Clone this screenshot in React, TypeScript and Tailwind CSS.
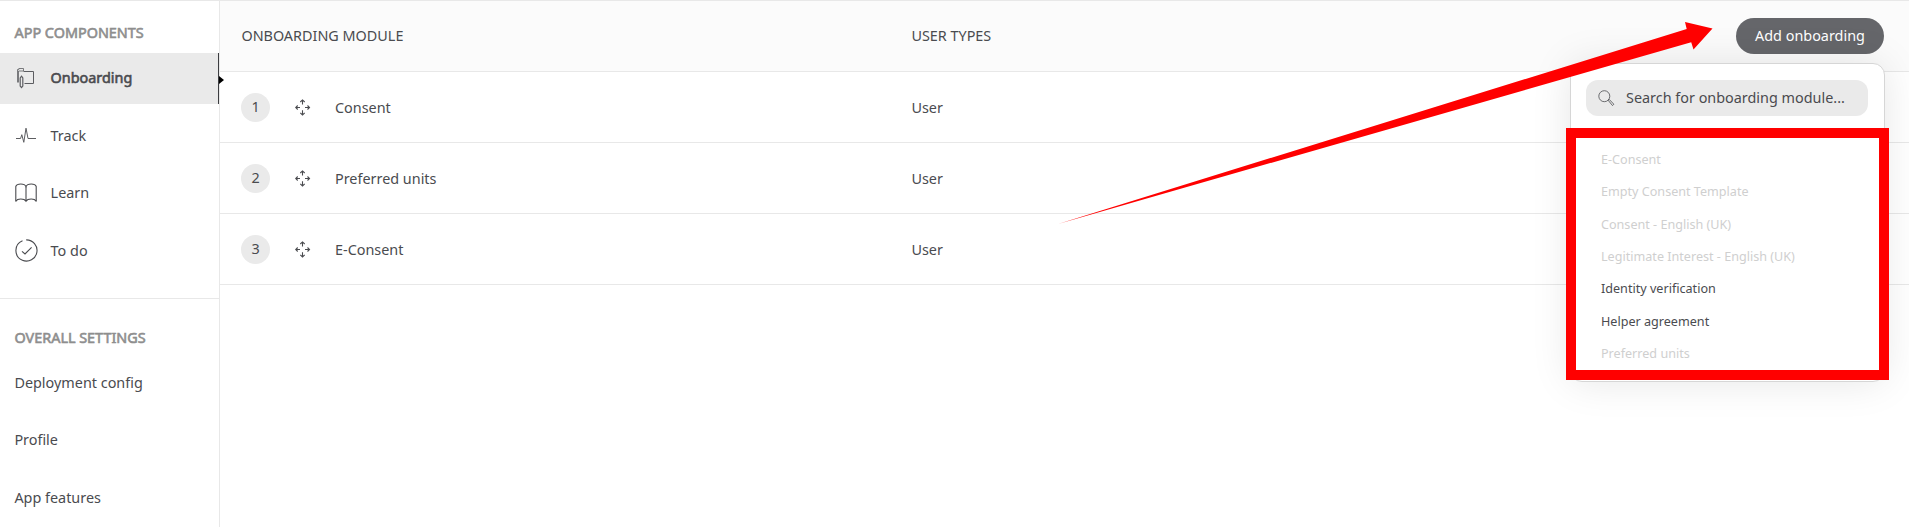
import type { ReactNode } from "react";

function OnboardingIcon() {
  return (
    <svg width="18" height="21" viewBox="0 0 18 21" fill="none" stroke="#5c5d61" strokeWidth="1" className="ml-[1px]">
      <path d="M.5 14.500V1.500H1.800V.5h4.700v2.500H1.500v11.500" strokeWidth=".8" />
      <path d="M6.500 3.500h10v12H7.500" />
      <path d="M4.500 8.200l1.300 1.700v8.200l-1.300 1.400-1.300-1.400V9.900z" strokeWidth="1.200" />
    </svg>
  );
}

function TrackIcon() {
  return (
    <svg width="20" height="17" viewBox="0 0 20 17" fill="none" stroke="#5c5d61" strokeWidth="1">
      <path d="M0 11.500h4.600l1.200-3.800 2 7.600L10 1.200l2 10.300h8" />
    </svg>
  );
}

function LearnIcon() {
  return (
    <svg width="22" height="20" viewBox="0 0 22 20" fill="none" stroke="#4a4b4f" strokeWidth="1.100" className="-ml-px">
      <path d="M.8 18.500V3.500C1.500 1.500 3.500 1 5.800 1S10.300 1.800 11 3.600c.7-1.800 2.900-2.600 5.200-2.600s4.300.5 5 2.500v15" />
      <path d="M11 3.600v15M.8 18.200c1-1.700 3-2.200 5-2.200s4.200.5 5.200 2.200c1-1.700 3.200-2.200 5.200-2.200s4 .5 5 2.200" />
    </svg>
  );
}

function TodoIcon() {
  return (
    <svg width="23" height="23" viewBox="0 0 23 23" fill="none" stroke="#4a4b4f" strokeWidth="1.100" className="-ml-px">
      <path d="M11.200.9a10.600 10.600 0 1 1-3.800 20.400A10.600 10.600 0 0 1 7.500 1.700" />
      <path d="M7 12.300l3 2.700 6.600-6.700" />
    </svg>
  );
}

function MoveIcon() {
  return (
    <svg width="16" height="17" viewBox="0 0 16 17" fill="none" stroke="#4a4b4f" strokeWidth="1.100">
      <path d="M7.500 5.500V1M5.300 3L7.500.9 9.700 3M7.500 11.200V16m-2.200-2.100l2.200 2.100 2.200-2.100" />
      <path d="M5 8.500H.8M2.700 6.500L.7 8.500l2 2M10 8.500h4.700m-2.200-2l2 2-2 2" />
    </svg>
  );
}

function SearchIcon() {
  return (
    <svg width="17" height="17" viewBox="0 0 17 17" fill="none" stroke="#5c5d61" strokeWidth=".9">
      <circle cx="6.300" cy="6.200" r="5.500" />
      <path d="M10 10.100l1-.9 4.800 5-1.300 1.400z" />
    </svg>
  );
}

function NavItem({ icon, label, active }: { icon: ReactNode; label: string; active?: boolean }) {
  return (
    <li
      className={
        active
          ? "relative flex h-[51px] items-center border-r border-[#3c3d40] bg-[#eaeaea] pl-4"
          : "flex h-[51px] items-center pl-4"
      }
    >
      <span className="flex w-[34.600px] shrink-0">{icon}</span>
      <span className={active ? "-mt-0.5 [-webkit-text-stroke:0.6px_#4a4b4f]" : ""}>{label}</span>
      {active && (
        <svg width="5" height="8" viewBox="0 0 5 8" className="absolute top-[23px] -right-[6px]">
          <path d="M0 0l5 4-5 4z" fill="#000" />
        </svg>
      )}
    </li>
  );
}

const rows = [
  { id: 1, name: "Consent", user: "User" },
  { id: 2, name: "Preferred units", user: "User" },
  { id: 3, name: "E-Consent", user: "User" },
];

const modules = [
  { name: "E-Consent", enabled: false },
  { name: "Empty Consent Template", enabled: false },
  { name: "Consent - English (UK)", enabled: false },
  { name: "Legitimate Interest - English (UK)", enabled: false },
  { name: "Identity verification", enabled: true },
  { name: "Helper agreement", enabled: true },
  { name: "Preferred units", enabled: false },
];

const heading = "pl-[14.500px] text-[#8e8e8e] [-webkit-text-stroke:0.6px_#8e8e8e]";

export default function App() {
  return (
    <div className="relative flex h-[527px] w-[1909px] overflow-hidden border-t border-[#e8e8e8] bg-white font-['Noto_Sans',sans-serif] text-[14.400px] leading-5 text-[#4a4b4f]">
      <aside className="w-[220px] shrink-0 border-r border-[#e8e8e8]">
        <section className="h-[298px] border-b border-[#e8e8e8]">
          <h2 className={"h-[52px] pt-[22px] " + heading}>APP COMPONENTS</h2>
          <ul className="flex flex-col gap-[6.400px]">
            <NavItem icon={<OnboardingIcon />} label="Onboarding" active />
            <NavItem icon={<TrackIcon />} label="Track" />
            <NavItem icon={<LearnIcon />} label="Learn" />
            <NavItem icon={<TodoIcon />} label="To do" />
          </ul>
        </section>
        <section>
          <h2 className={"h-[58px] pt-[29px] " + heading}>OVERALL SETTINGS</h2>
          <ul className="flex flex-col gap-[6.600px]">
            {["Deployment config", "Profile", "App features"].map((label) => (
              <li key={label} className="flex h-[51px] items-center pl-[14.400px]">
                {label}
              </li>
            ))}
          </ul>
        </section>
      </aside>

      <main className="flex-1">
        <div className="flex h-[71px] items-center border-b border-[#e8e8e8] bg-[#fbfbfb] pr-[25px] pl-[21.400px]">
          <span className="-mt-px w-[670px]">ONBOARDING MODULE</span>
          <span className="-mt-px flex-1">USER TYPES</span>
          <button className="h-9 w-[148px] rounded-full bg-[#65666a] pb-px text-white">Add onboarding</button>
        </div>
        {rows.map((row) => (
          <div key={row.id} className="flex h-[71px] items-center border-b border-[#e8e8e8] pl-[21px]">
            <span className="flex h-[29px] w-[29px] items-center justify-center rounded-full bg-[#eaeaea]">
              {row.id}
            </span>
            <span className="ml-[25px] flex w-10">
              <MoveIcon />
            </span>
            <span className="mt-[2px] w-[576.400px]">{row.name}</span>
            <span className="mt-[2px]">{row.user}</span>
          </div>
        ))}
      </main>

      <div className="absolute top-[62px] left-[1570px] h-[319px] w-[315px] rounded-xl border border-[#d6d6d6] bg-white px-[15px] pt-4 shadow-[0_0_40px_rgba(0,0,0,0.10)]">
        <div className="flex h-9 w-[282px] items-center rounded-xl bg-[#eaeaea] pl-3">
          <SearchIcon />
          <span className="-mt-px ml-[11px]">Search for onboarding module...</span>
        </div>
        <ul className="mt-[27.700px] pl-[15px] text-[12.600px]">
          {modules.map((m) => (
            <li
              key={m.name}
              className={m.enabled ? "flex h-[32.350px] items-center" : "flex h-[32.350px] items-center text-[#cfcfcf]"}
            >
              {m.name}
            </li>
          ))}
        </ul>
      </div>

      <div className="absolute top-[127px] left-[1566px] h-[252px] w-[323px] border-[10px] border-t-[10px] border-[#ff0000]" />
      <svg width="1909" height="527" viewBox="0 0 1909 527" className="pointer-events-none absolute -top-px left-0">
        <path d="M1058 224L1686.700 29 1685 22l27.500 6.600-19 20.900-2.300-7.200z" fill="#f00" />
      </svg>
    </div>
  );
}
